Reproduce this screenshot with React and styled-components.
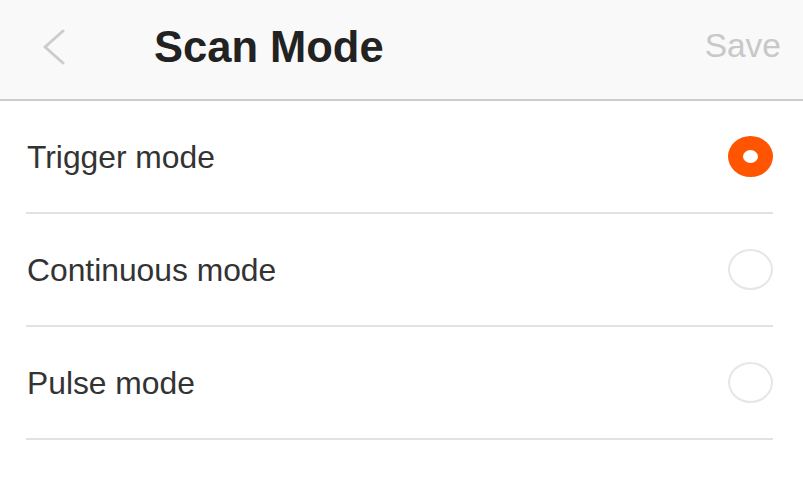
import React, { useState } from 'react';
import styled, { createGlobalStyle } from 'styled-components';

const GlobalStyle = createGlobalStyle`
    html, body{
        margin:0;
        padding:0;
        background-color:#fff;
        font-family:"Liberation Sans", Arial, sans-serif;
    }
`;

const Page = styled.div`
    width:803px;
    height:494px;
    background-color:#fff;
    overflow:hidden;
`;

const Header = styled.div`
    height:101px;
    background-color:#f9f9f9;
    border-bottom:2px solid #cccccc;
    display:flex;
    align-items:center;
    padding:0 22px 0 42px;
    box-sizing:border-box;
`;

const BackButton = styled.div`
    width:112px;
    height:101px;
    display:flex;
    align-items:center;
    margin-top:-6px;
    cursor:pointer;
`;

const Title = styled.h1`
    flex:1;
    margin:0;
    font-size:43.5px;
    font-weight:bold;
    color:#222;
    line-height:1;
    margin-top:-4px;
`;

const SaveButton = styled.span`
    font-size:33.5px;
    color:#c8c8c8;
    line-height:1;
    margin-top:-8px;
    cursor:pointer;
`;

const List = styled.div`
    padding:0 30px 0 26px;
`;

const Row = styled.div`
    height:111px;
    display:flex;
    align-items:center;
    justify-content:space-between;
    border-bottom:2px solid #e2e2e2;
    cursor:pointer;
`;

const Label = styled.span`
    font-size:31.8px;
    color:#333;
    padding-left:1px;
    margin-top:2px;
`;

const Radio = styled.span`
    width:45px;
    height:41px;
    border-radius:50%;
    box-sizing:border-box;
    display:flex;
    align-items:center;
    justify-content:center;
    background-color:${p => (p.$checked ? '#ff5500' : '#fff')};
    border:${p => (p.$checked ? '0' : '2px solid #e6e6e6')};

    &::after{
        content:"";
        display:${p => (p.$checked ? 'block' : 'none')};
        width:15px;
        height:13px;
        border-radius:50%;
        background-color:#fff;
    }
`;

const modes = ['Trigger mode', 'Continuous mode', 'Pulse mode'];

const App = () => {
    const [selected, setSelected] = useState(0);

    return (
        <Page>
            <GlobalStyle />
            <Header>
                <BackButton>
                    <svg width="24" height="36" viewBox="0 0 24 36" fill="none">
                        <polyline points="21,2 3,18 21,34" stroke="#cccccc" strokeWidth="3" strokeLinecap="round" strokeLinejoin="round" />
                    </svg>
                </BackButton>
                <Title>Scan Mode</Title>
                <SaveButton>Save</SaveButton>
            </Header>
            <List>
                {modes.map((m, i) => (
                    <Row key={m} onClick={() => setSelected(i)}>
                        <Label>{m}</Label>
                        <Radio $checked={selected === i} />
                    </Row>
                ))}
            </List>
        </Page>
    );
};

export default App;
